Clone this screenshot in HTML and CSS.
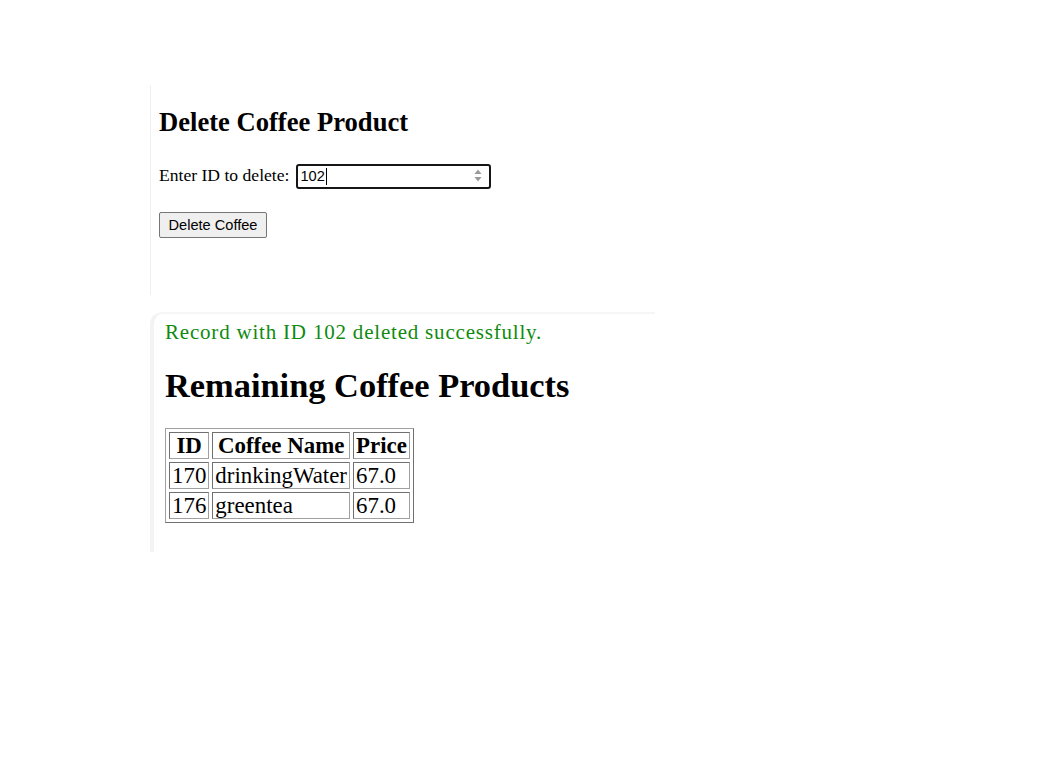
FILE: index.html
```html
<!DOCTYPE html>
<html lang="en">
<head>
<meta charset="utf-8">
<title>Delete Coffee Product</title>
<link rel="stylesheet" href="styles.css">
</head>
<body>
<div class="page">
  <section class="frame frame-form">
    <h2 class="form-title">Delete Coffee Product</h2>
    <div class="field-row">
      <span class="field-label">Enter ID to delete:</span>
      <div class="field">
        <span class="field-value">102</span><span class="caret"></span>
        <svg class="spinner" width="8" height="14" viewBox="0 0 8 14" aria-hidden="true">
          <path d="M4 0.5 L7.5 5 L0.5 5 Z" fill="#9a9a9a"/>
          <path d="M0.5 8 L7.5 8 L4 12.5 Z" fill="#9a9a9a"/>
        </svg>
      </div>
    </div>
    <button class="btn" type="button">Delete Coffee</button>
  </section>

  <section class="frame frame-result">
    <p class="msg">Record with ID 102 deleted successfully.</p>
    <h2 class="result-title">Remaining Coffee Products</h2>
    <table class="products">
      <tr><th>ID</th><th>Coffee Name</th><th>Price</th></tr>
      <tr><td>170</td><td>drinkingWater</td><td>67.0</td></tr>
      <tr><td>176</td><td>greentea</td><td>67.0</td></tr>
    </table>
  </section>
</div>
</body>
</html>
```

FILE: styles.css
```css
html, body {
  margin: 0;
  padding: 0;
  background: #ffffff;
}

body {
  font-family: "Liberation Serif", "Times New Roman", serif;
  color: #000000;
}

.page {
  padding: 85px 0 0 150px;
}

.frame-form {
  box-sizing: border-box;
  width: 505px;
  height: 210px;
  border-left: 1px solid #f0f0f0;
  padding: 22px 0 0 8px;
}

.form-title {
  margin: 0;
  font-size: 26.6px;
  font-weight: bold;
  line-height: 31px;
}

.field-row {
  display: flex;
  align-items: baseline;
  margin-top: 26px;
  font-size: 17.6px;
}

.field-label {
  margin-right: 7px;
}

.field {
  position: relative;
  box-sizing: border-box;
  width: 195px;
  height: 25px;
  border: 2px solid #161616;
  border-radius: 3px;
  padding: 2px 2px 0 2px;
  font-family: "Liberation Sans", Arial, sans-serif;
  font-size: 14.6px;
  line-height: 17px;
  display: flex;
  align-items: baseline;
}

.caret {
  display: inline-block;
  width: 1px;
  height: 17px;
  background: #000;
  align-self: flex-start;
  margin-left: 1px;
}

.spinner {
  position: absolute;
  right: 7px;
  top: 3px;
}

.btn {
  display: block;
  box-sizing: border-box;
  margin-top: 23px;
  width: 108px;
  height: 26px;
  padding: 0;
  border: 1px solid #767676;
  border-radius: 2px;
  background: #efefef;
  font-family: "Liberation Sans", Arial, sans-serif;
  font-size: 14.6px;
  color: #000;
}

.frame-result {
  box-sizing: border-box;
  margin-top: 17px;
  width: 505px;
  height: 240px;
  border-left: 4px solid #f3f3f3;
  border-top: 2px solid #f6f6f6;
  border-top-left-radius: 12px;
  padding: 6px 0 0 11px;
}

.msg {
  margin: 0;
  color: #108a10;
  font-size: 21px;
  letter-spacing: 0.8px;
  line-height: 24px;
}

.result-title {
  margin: 22px 0 0 0;
  font-size: 34.4px;
  font-weight: bold;
  line-height: 39px;
}

.products {
  margin-top: 23px;
  border: 1px solid #808080;
  border-color: #a0a0a0 #707070 #707070 #a0a0a0;
  border-spacing: 3px;
  font-size: 22.9px;
  line-height: 23px;
}

.products th,
.products td {
  border: 1px solid #808080;
  border-color: #707070 #a0a0a0 #a0a0a0 #707070;
  padding: 1px 2px;
}

.products th {
  font-weight: bold;
  text-align: center;
}

.products td {
  text-align: left;
}
```
